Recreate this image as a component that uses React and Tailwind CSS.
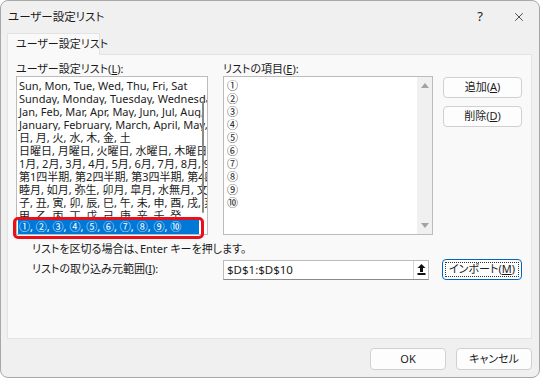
import { X } from 'lucide-react';

const LEFT_ROWS = [
  'Sun, Mon, Tue, Wed, Thu, Fri, Sat',
  'Sunday, Monday, Tuesday, Wednesday, Thursday',
  'Jan, Feb, Mar, Apr, May, Jun, Jul, Aug, Sep',
  'January, February, March, April, May, June',
  '日, 月, 火, 水, 木, 金, 土',
  '日曜日, 月曜日, 火曜日, 水曜日, 木曜日, 金曜日',
  '1月, 2月, 3月, 4月, 5月, 6月, 7月, 8月, 9月',
  '第1四半期, 第2四半期, 第3四半期, 第4四半期',
  '睦月, 如月, 弥生, 卯月, 皐月, 水無月, 文月',
  '子, 丑, 寅, 卯, 辰, 巳, 午, 未, 申, 酉, 戌, 亥',
  '甲, 乙, 丙, 丁, 戊, 己, 庚, 辛, 壬, 癸',
];

const ITEMS = ['①', '②', '③', '④', '⑤', '⑥', '⑦', '⑧', '⑨', '⑩'];

function Btn({ children, className = '' }) {
  return (
    <div
      className={`h-[21px] flex items-center justify-center bg-[#fdfdfd] border border-[#d0d0d0] rounded-[4px] whitespace-nowrap ${className}`}
    >
      {children}
    </div>
  );
}

export default function App() {
  return (
    <div
      className="w-[540px] h-[378px] bg-white text-[11px] text-[#1b1b1b] [font-feature-settings:'palt'] overflow-hidden"
      style={{ fontFamily: '"Noto Sans", "Noto Sans CJK JP", sans-serif' }}
    >
      <div className="w-full h-full bg-[#f0f0f0] border border-[#a8a8a8] rounded-[8px] flex flex-col">
        {/* title bar */}
        <div className="h-[32px] flex items-center pl-[7px] shrink-0">
          <span className="flex-1 text-[11.5px]">ユーザー設定リスト</span>
          <span className="w-[20px] text-center text-[13px] mr-[22px]">?</span>
          <X className="w-[14px] h-[14px] mr-[13px]" strokeWidth={1.3} />
        </div>

        {/* tab */}
        <div className="h-[22px] flex pl-[6px] shrink-0">
          <div className="w-[93px] h-[22px] bg-[#f9f9f9] border border-b-0 border-[#e3e3e3] flex items-center pl-[8px] whitespace-nowrap relative z-10">
            ユーザー設定リスト
          </div>
        </div>

        {/* panel */}
        <div className="ml-[6px] mr-[7px] h-[285px] bg-[#f9f9f9] border border-[#e3e3e3] -mt-px pt-[6px] pl-[8px] shrink-0">
          <div className="flex">
            {/* left list */}
            <div className="w-[192px] flex flex-col relative">
              <div className="h-[15px] leading-[15px]">ユーザー設定リスト(<u>L</u>):</div>
              <div className="h-[159px] bg-white border border-[#bcbcbc] relative overflow-hidden pt-[2px]">
                {LEFT_ROWS.map((row) => (
                  <div key={row} className="h-[13px] leading-[13px] pl-[2px] pr-[10px] whitespace-nowrap overflow-hidden">
                    {row}
                  </div>
                ))}
                <div className="relative -mt-[3px] h-[15px] leading-[15px] ml-[1px] mr-[8px] bg-[#0078d7] text-white pl-[1px] whitespace-nowrap overflow-hidden">
                  ①, ②, ③, ④, ⑤, ⑥, ⑦, ⑧, ⑨, ⑩
                </div>
                <div className="absolute right-[3px] top-[24px] w-[2px] h-[112px] bg-[#8a8a8a] rounded-full" />
              </div>
              {/* red annotation */}
              <div className="absolute left-[-3px] top-[156px] w-[191px] h-[22px] border-[3px] border-[#e8101a] rounded-[5px]" />
            </div>

            {/* items list */}
            <div className="w-[210px] ml-[15px] flex flex-col">
              <div className="h-[15px] leading-[15px]">リストの項目(<u>E</u>):</div>
              <div className="h-[159px] bg-white border border-[#bcbcbc] flex">
                <div className="flex-1 pt-[2px] pl-[3px]">
                  {ITEMS.map((it) => (
                    <div key={it} className="h-[13px] leading-[13px]">{it}</div>
                  ))}
                </div>
                <div className="w-[15px] bg-[#f0f0f0] flex flex-col items-center justify-between py-[6px]">
                  <svg width="8" height="5" viewBox="0 0 8 5"><path d="M0 5 L4 0 L8 5 Z" fill="#a3a3a3" /></svg>
                  <svg width="8" height="5" viewBox="0 0 8 5"><path d="M0 0 L4 5 L8 0 Z" fill="#a3a3a3" /></svg>
                </div>
              </div>
            </div>

            {/* side buttons */}
            <div className="w-[79px] ml-[10px] pt-[16px] flex flex-col gap-[8px]">
              <Btn>追加(<u>A</u>)</Btn>
              <Btn>削除(<u>D</u>)</Btn>
            </div>
          </div>

          <div className="pl-[16px] mt-[7px] h-[14px] leading-[14px]">
            リストを区切る場合は、Enter キーを押します。
          </div>

          <div className="flex items-center mt-[3px]">
            <div className="w-[207px] pl-[16px]">リストの取り込み元範囲(<u>I</u>):</div>
            <div className="w-[206px] h-[20px] bg-white border border-[#bcbcbc] border-b-[#8a8a8a] flex">
              <div className="flex-1 pl-[3px] leading-[18px] text-[11.5px]">$D$1:$D$10</div>
              <div className="w-[15px] border-l border-[#d6d6d6] flex items-center justify-center">
                <svg width="9" height="11" viewBox="0 0 9 11">
                  <path d="M4.5 0 L8.5 4 L6 4 L6 8 L3 8 L3 4 L0.5 4 Z" fill="#111" />
                  <rect x="0.5" y="9" width="8" height="2" fill="#111" />
                </svg>
              </div>
            </div>
            <div className="ml-[13px] w-[80px] h-[21px] rounded-[4px] border border-[#0067c0] bg-[#fdfdfd] p-[2px]">
              <div className="w-full h-full border border-dotted border-[#333] flex items-center justify-center whitespace-nowrap">
                インポート(<u>M</u>)
              </div>
            </div>
          </div>
        </div>

        {/* footer */}
        <div className="flex justify-end gap-[10px] pr-[7px] mt-[9px]">
          <Btn className="w-[76px] h-[22px]">OK</Btn>
          <Btn className="w-[76px] h-[22px]">キャンセル</Btn>
        </div>
      </div>
    </div>
  );
}
